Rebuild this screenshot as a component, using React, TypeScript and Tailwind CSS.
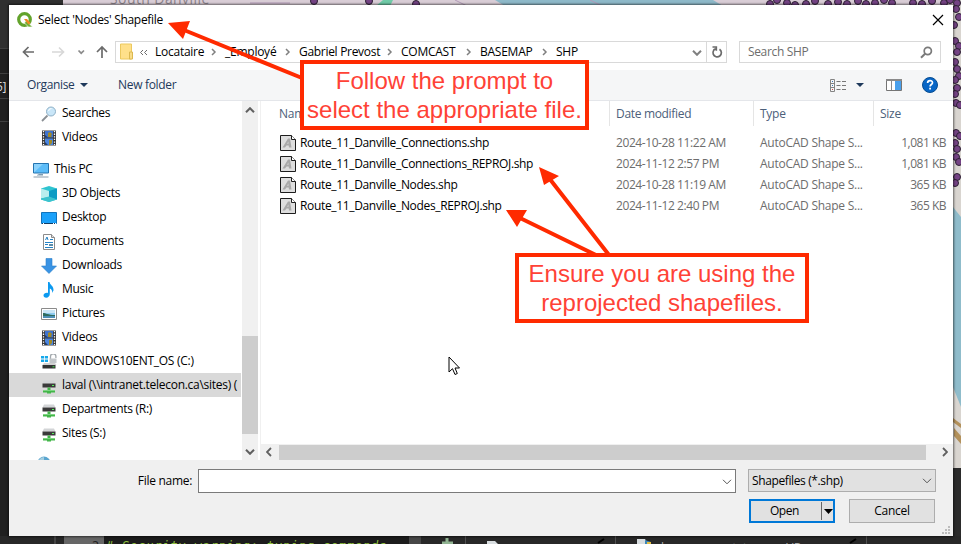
import React from "react";

type IconProps = { className?: string };

const Searches = () => (
  <svg width="16" height="16" viewBox="0 0 16 16">
    <path d="M1 15L6.500 9.500" stroke="#8a8f94" strokeWidth="1.800" />
    <circle cx="10" cy="5.500" r="4.500" fill="#c9e6f8" stroke="#8fb0c6" />
    <path d="M7.500 5a3 3 0 013-2.500" stroke="#fff" fill="none" />
  </svg>
);
const Film = () => (
  <svg width="16" height="16" viewBox="0 0 16 16">
    <path d="M1 0.500h14v15H1z" fill="#383838" />
    <path d="M4 1h8v6.500H4z" fill="#3f73cf" />
    <path d="M4 8.500h8V15H4z" fill="#4a86e0" />
    <path d="M7 3l2-1 2 2-1 2 1 1H7zM8 10h3v3l-2 2H8z" fill="#a08a28" />
    <path d="M4 5l3 2.500H4zM4 12l3 3H4z" fill="#213b6c" />
    <path d="M2.500 1v14M13.500 1v14" stroke="#fff" strokeWidth="1.300" strokeDasharray="1.300 1.300" />
  </svg>
);
const Pc = () => (
  <svg width="16" height="16" viewBox="0 0 16 16">
    <path d="M0.500 1.500h15v9.500H0.500z" fill="#5cbcf8" stroke="#2474b0" />
    <path d="M1 10.500V2h9z" fill="#8bd2fc" />
    <path d="M6 12h4v1.500H4V13z" fill="#7f9bb0" />
    <path d="M0.500 15h15" stroke="#8a9cab" />
  </svg>
);
const Cube = () => (
  <svg width="16" height="16" viewBox="0 0 16 16">
    <path d="M0 2.500L8 0l8 2.500v11L8 16l-8-2.500z" fill="#2fc4d0" />
    <path d="M0 2.500L8 5v6l-8 1.500z" fill="#b9eeee" />
    <path d="M8 5l8-2.500v11L8 11z" fill="#0d9cc4" />
    <path d="M0 13.500V12.500L8 10.500l8 3L8 16z" fill="#3cc3ce" />
  </svg>
);
const Desk = () => (
  <svg width="16" height="16" viewBox="0 0 16 16">
    <path d="M0.500 2.500h15v11H0.500z" fill="#1ba1fa" stroke="#1273bb" />
    <path d="M1 13.500h14" stroke="#123e66" />
    <path d="M2 13.500h1M12 13.500h1M14 13.500h1" stroke="#fff" />
  </svg>
);
const Docs = () => (
  <svg width="16" height="16" viewBox="0 0 16 16">
    <path d="M2.500 0.500h8l3 3v12h-11z" fill="#fff" stroke="#8b8b8b" />
    <path d="M10.500 0.500v3h3" fill="#ddd" stroke="#8b8b8b" />
    <path d="M4.500 6l1.500-3 1 3M9 5.500h3M4 8.500h8M4 10.500h3M4 13.500h8" stroke="#2582c4" fill="none" />
    <path d="M8 10h4v2H8z" fill="#5b8ba8" />
  </svg>
);
const Down = () => (
  <svg width="16" height="16" viewBox="0 0 16 16">
    <path d="M5 0.500h6v7.500h4.500L8 15.500 0.500 8H5z" fill="#3993e4" stroke="#2b7fc9" strokeWidth=".6" />
  </svg>
);
const Music = () => (
  <svg width="16" height="16" viewBox="0 0 16 16">
    <path d="M7 0h1.500c.3 3 4.500 4 4 8.500l-1.500 2.500c.6-3-.8-4-2.200-4.600V12c0 2-1.500 3.700-3.600 3.700C3.500 15.700 2.500 14.700 2.500 13.500c0-2 2.500-3 4.500-2.500z" fill="#0c9af0" />
  </svg>
);
const Pics = () => (
  <svg width="16" height="16" viewBox="0 0 16 16">
    <path d="M0.500 2.500h15v11H0.500z" fill="#fff" stroke="#8b8b8b" />
    <path d="M2 4h12v8H2z" fill="#8ecbf0" />
    <path d="M2 4h12v3H2z" fill="#c9e5f6" />
    <path d="M2 7c3 0 5 2 12 2v1H2z" fill="#2f6c60" />
    <path d="M2 10h12v2H2z" fill="#4c8eb6" />
  </svg>
);
const DriveC = () => (
  <svg width="16" height="16" viewBox="0 0 16 16">
    <path d="M0 2h3v2.500H0zM3.800 2H7v2.500H3.800zM0 5.500h3V8H0zM3.800 5.500H7V8H3.800z" fill="#16a8ea" />
    <path d="M9.500 5V2.500a2.700 2.700 0 015.400 0V4" fill="none" stroke="#a3a9ad" strokeWidth="1.300" />
    <path d="M8.500 4.500h7v4.500h-7z" fill="#c3c7ca" />
    <path d="M3 9h11l1.500 2H1.500z" fill="#d2d2d2" />
    <path d="M1.500 11h13v3.500h-13z" fill="#333" />
    <path d="M11.500 12.300h2v1h-2z" fill="#45e04c" />
  </svg>
);
const NetDrive = () => (
  <svg width="16" height="16" viewBox="0 0 16 16">
    <path d="M3 2.500h10l1.500 3h-13z" fill="#d3d5d7" />
    <path d="M1.500 5.500h13v4h-13z" fill="#3a3a3a" />
    <path d="M11 7h2v1h-2z" fill="#57f05c" />
    <path d="M6.500 9.500h3v3h4.500v2h-4v1H6v-1H2v-2h4.500z" fill="#43b649" />
    <path d="M2 12h12v1H2z" fill="#7ed482" />
  </svg>
);
const Globe = () => (
  <svg width="16" height="16" viewBox="0 0 16 16">
    <circle cx="8" cy="10" r="6.500" fill="#5aa5cf" />
    <path d="M3 7a6 6 0 015-3v6H3z" fill="#a6cfe0" />
  </svg>
);
const ShpFile = () => (
  <svg width="16" height="16" viewBox="0 0 16 16" className="shrink-0">
    <path d="M0.500 0.500h11l4 4v11H0.500z" fill="#dedede" stroke="#1d1d1d" />
    <path d="M11.500 0.500v4h4" fill="#fff" stroke="#1d1d1d" />
    <path d="M2.500 12.500L8 3.500h2L11.500 12.500H9L8.700 10.500H6.500L5 12.500zM7.200 8.700h1.300L8.300 6.500z" fill="#a9a9a9" />
  </svg>
);

const Chev = ({ className = "" }: IconProps) => (
  <svg width="6" height="8" viewBox="0 0 6 8" className={`shrink-0 ${className}`}>
    <path d="M1 1l3 3-3 3" fill="none" stroke="#808080" strokeWidth="1.500" />
  </svg>
);
const ChevDown = ({ className = "" }: IconProps) => (
  <svg width="10" height="6" viewBox="0 0 10 6" fill="none" stroke="currentColor" className={className}>
    <path d="M1 0.800l4 4 4-4" strokeWidth="inherit" />
  </svg>
);

function TreeItem({ icon, label, level = 1, selected = false }: { icon: React.ReactNode; label: string; level?: number; selected?: boolean }) {
  return (
    <div className={`flex h-6 shrink-0 items-center gap-[5px] whitespace-nowrap tracking-[-0.28px] ${level ? "pl-8" : "pl-6"} ${selected ? "bg-[#d9d9d9]" : ""}`}>
      <span className="mt-px shrink-0">{icon}</span>
      <span>{label}</span>
    </div>
  );
}

const files = [
  ["Route_11_Danville_Connections.shp", "2024-10-28 11:22 AM", "1,081 KB"],
  ["Route_11_Danville_Connections_REPROJ.shp", "2024-11-12 2:57 PM", "1,081 KB"],
  ["Route_11_Danville_Nodes.shp", "2024-10-28 11:19 AM", "365 KB"],
  ["Route_11_Danville_Nodes_REPROJ.shp", "2024-11-12 2:40 PM", "365 KB"],
];

const mapPins = [
  [314, 1], [369, 1], [416, 4], [770, 4], [777, 0], [787, 3], [795, 5], [806, 4], [815, 1], [828, 4], [838, 2], [847, 4], [858, 1], [866, 4], [875, 3], [884, 0], [892, 3], [913, 3], [922, 4], [932, 1], [944, 3], [950, 0],
  [957, 3], [956, 9], [959, 17], [954, 25], [955, 41], [959, 46], [957, 52], [955, 62], [957, 69], [959, 76], [955, 80], [957, 88], [955, 94], [956, 103], [960, 105], [956, 133], [960, 136], [955, 143], [957, 149], [956, 157], [959, 162], [957, 177], [955, 183],
];

function Desktop() {
  return (
    <svg width="961" height="544" className="absolute inset-0">
      <rect width="961" height="544" fill="#202020" />
      <rect width="63" height="6" fill="#303030" />
      <rect width="9" height="48" fill="#303030" />
      <path d="M0 48.500h9M0 73.500h9M0 98.500h9M0 121.500h9" stroke="#404040" />
      <rect x="63" width="898" height="6" fill="#d9cdd6" />
      <path d="M383 0h10l-3 6h-14z" fill="#70cba8" />
      <path d="M495 0h218l10 6H505z" fill="#8eb9c9" />
      <path d="M455 0l12 6M590 0l12 6M250 3h40" stroke="#b39ab8" />
      <rect x="953" width="8" height="468" fill="#d9d5d0" />
      <path d="M953 207l8 10v190l-8-20z" fill="#8fbccb" />
      <path d="M953 418l8 6v4l-8-6zM954 428l7 8v8l-7-8z" fill="#b3915b" />
      {mapPins.map(([x, y], i) => (
        <circle key={i} cx={x} cy={y} r="3.500" fill="#744384" stroke="#2d2033" />
      ))}
      <rect x="953" y="468" width="8" height="76" fill="#2b2b2b" />
      <rect y="536" width="961" height="8" fill="#282828" />
      <rect x="54" y="536" width="2" height="8" fill="#444" />
      <rect x="64" y="536" width="40" height="8" fill="#666" />
      <rect x="104" y="536" width="305" height="8" fill="#1c1c1c" />
      <rect x="409" y="536" width="12" height="8" fill="#474747" />
      <path d="M465.500 536v8M615.500 536v8M866.500 536v8" stroke="#505050" />
      <path d="M447 538v6M442 543h11" stroke="#91b492" strokeWidth="3" />
      <path d="M487 541h8l3 3h-11zM637 539h8l3 5h-11z" fill="#d8dde0" />
      <path d="M645 540l6 2v2h-6z" fill="#3e87b8" />
      <path d="M647 542h4v2h-4z" fill="#e2bd3f" />
      <path d="M598 543l6-4M850 543l6-4" stroke="#000" strokeWidth="2" />
      <g fontFamily="'DejaVu Sans Mono', monospace" fontSize="12">
        <text x="92" y="550" fill="#222">2</text>
        <text x="106" y="550" fill="#8fc03f" fontStyle="italic" textLength="280">
          # Security warning: typing commands
        </text>
      </g>
      <g fontFamily="'Open Sans', sans-serif" fontSize="12">
        <text x="661" y="552" fill="#aaa" textLength="140">layer_export_to_csv_VR</text>
        <text x="110" y="4" fill="#8b828a" textLength="99" fontSize="14">South Danville</text>
        <text x="-4" y="91" fill="#ddd">5]</text>
      </g>
    </svg>
  );
}

export default function App() {
  return (
    <div className="relative h-[544px] w-[961px] overflow-hidden font-['Open_Sans','Noto_Sans',sans-serif] text-[12px] leading-4 tracking-[-0.25px] text-black">
      <Desktop />

      <div className="absolute top-[5px] left-[9px] flex h-[531px] w-[944px] flex-col bg-white shadow-[0_0_2px_1px_rgba(0,0,0,0.55)]">
        <header className="flex h-[29px] shrink-0 items-center pr-[9px] pl-2">
          <svg width="16" height="16" viewBox="0 0 16 16">
            <circle cx="7.500" cy="7.500" r="5.800" fill="none" stroke="#63a32c" strokeWidth="3.200" />
            <path d="M9 8.500l6.500 6.500h-4L7.500 11z" fill="#6fae34" stroke="#fff" strokeWidth=".6" />
            <path d="M7 7h3l3.500 4-2 1.500z" fill="#ee8a22" />
          </svg>
          <h1 className="ml-[5px] tracking-[-0.3px]">Select 'Nodes' Shapefile</h1>
          <svg width="12" height="12" viewBox="0 0 12 12" className="ml-auto">
            <path d="M1 1l10 10M11 1L1 11" stroke="#000" strokeWidth="1.200" />
          </svg>
        </header>

        <nav className="flex h-9 shrink-0 items-center pl-[13px]">
          <svg width="86" height="16" viewBox="0 0 86 16" fill="none" strokeWidth="1.700" className="mr-[7px]">
            <path d="M12 8H1.500M6.500 3L1.500 8l5 5" stroke="#6b6b6b" />
            <path d="M30 8h11M37 3.500L41.500 8 37 12.500" stroke="#d8d8d8" />
            <path d="M56.500 6.500l2.700 2.700L62 6.500" stroke="#8b8b8b" />
            <path d="M80 14V3M75 8l5-5 5 5" stroke="#6b6b6b" />
          </svg>
          <div className="flex h-[22px] w-[612px] border border-[#d9d9d9]">
            <div className="flex flex-1 items-center">
              <svg width="14" height="18" viewBox="0 0 14 18" className="ml-[4px] shrink-0">
                <path d="M0.500 1h11v15h-11z" fill="#ffe08a" stroke="#ecc95f" />
                <path d="M9.500 9h3v7h-3z" fill="#f9dd8a" stroke="#dcb850" />
              </svg>
              <svg width="9" height="7" viewBox="0 0 9 7" fill="none" stroke="#6b6b6b" className="ml-[5px] shrink-0">
                <path d="M4 1L1.500 3.500 4 6M8 1L5.500 3.500 8 6" />
              </svg>
              <span className="ml-[7px] w-[48px] shrink-0 whitespace-nowrap">Locataire</span>
              <Chev className="ml-[8px]" />
              <span className="ml-[8px] w-[51px] shrink-0 whitespace-nowrap">_Employé</span>
              <Chev className="ml-[9px]" />
              <span className="ml-[8px] w-[79px] shrink-0 whitespace-nowrap tracking-[-0.3px]">Gabriel Prevost</span>
              <Chev className="ml-[9px]" />
              <span className="ml-[8px] w-[57px] shrink-0 whitespace-nowrap">COMCAST</span>
              <Chev className="ml-[8px]" />
              <span className="ml-[8px] w-[53px] shrink-0 whitespace-nowrap">BASEMAP</span>
              <Chev className="ml-[9px]" />
              <span className="ml-[8px]">SHP</span>
              <ChevDown className="mt-[2px] mr-[4px] ml-auto stroke-2 text-[#808080]" />
            </div>
            <div className="flex w-5 items-center justify-center border-l border-[#d9d9d9]">
              <svg width="12" height="13" viewBox="0 0 12 13" fill="none" stroke="#6b6b6b" strokeWidth="1.700">
                <path d="M8.500 3.200A4.200 4.200 0 116 2.500c-1.500 0-2.500.4-3.400 1.300M1.500 1h3.800v3.800" />
              </svg>
            </div>
          </div>
          <div className="ml-[12px] flex h-[22px] w-[202px] items-center justify-between border border-[#d9d9d9] pr-[7px] pl-2 text-[#6d6d6d]">
            <span className="tracking-[-0.35px]">Search SHP</span>
            <svg width="13" height="13" viewBox="0 0 13 13" fill="none" stroke="#7a7a7a">
              <circle cx="7.800" cy="5" r="3.600" strokeWidth="1.700" />
              <path d="M5.300 7.500L1 11.800" strokeWidth="2" />
            </svg>
          </div>
        </nav>

        <div className="flex h-[31px] shrink-0 items-center border-b border-[#e4e6ea] bg-[#f5f6f7] pr-[15px] pl-[18px] text-[#1e395b]">
          <span className="w-[47px] tracking-[-0.35px]">Organise</span>
          <svg width="8" height="4" viewBox="0 0 8 4" className="ml-[6px]">
            <path d="M0 0h8L4 4z" fill="#1e395b" />
          </svg>
          <span className="ml-[30px] tracking-[-0.32px]">New folder</span>
          <svg width="17" height="13" viewBox="0 0 17 13" className="ml-auto" fill="none" stroke="#848484">
            <path d="M0.500 0.500h4v12h-4zM0.500 4.500h4M0.500 8.500h4" />
            <path d="M6.500 2.500h4M12 2.500h4M6.500 6.500h4M12 6.500h4M6.500 10.500h4M12 10.500h4" stroke="#777" />
            <path d="M2 2.500h1M2 6.500h1" stroke="#3b78b5" />
            <path d="M2 10.500h1" stroke="#d24747" />
          </svg>
          <svg width="8" height="4" viewBox="0 0 8 4" className="mr-px ml-[9px]">
            <path d="M0 0h8L4 4z" fill="#1e395b" />
          </svg>
          <svg width="16" height="12" viewBox="0 0 16 12" className="ml-[21px]">
            <path d="M0.500 0.500h15v11H0.500z" fill="#fff" stroke="#757575" />
            <path d="M0 0h16v2H0zM5 2h1v9H5z" fill="#8a8a8a" />
            <path d="M9 2h6v9H9z" fill="#4aa0ec" />
          </svg>
          <svg width="16" height="16" viewBox="0 0 16 16" className="ml-[20px]">
            <circle cx="8" cy="8" r="7.500" fill="#0866c6" stroke="#084d91" />
            <path d="M5.600 6c0-3 4.900-3 4.900-.3C10.500 7.500 8.100 7.500 8.100 9.500" fill="none" stroke="#fff" strokeWidth="1.700" />
            <path d="M7.200 10.800H9v1.800H7.200z" fill="#fff" />
          </svg>
        </div>

        <main className="flex h-[359px] shrink-0">
          <aside className="flex w-[232px] flex-col overflow-hidden">
            <TreeItem icon={<Searches />} label="Searches" />
            <TreeItem icon={<Film />} label="Videos" />
            <div className="h-2 shrink-0" />
            <TreeItem icon={<Pc />} label="This PC" level={0} />
            <TreeItem icon={<Cube />} label="3D Objects" />
            <TreeItem icon={<Desk />} label="Desktop" />
            <TreeItem icon={<Docs />} label="Documents" />
            <TreeItem icon={<Down />} label="Downloads" />
            <TreeItem icon={<Music />} label="Music" />
            <TreeItem icon={<Pics />} label="Pictures" />
            <TreeItem icon={<Film />} label="Videos" />
            <TreeItem icon={<DriveC />} label="WINDOWS10ENT_OS (C:)" />
            <TreeItem icon={<NetDrive />} label="laval (\\intranet.telecon.ca\sites) (" selected />
            <TreeItem icon={<NetDrive />} label="Departments (R:)" />
            <TreeItem icon={<NetDrive />} label="Sites (S:)" />
            <div className="mt-2 shrink-0 pl-[27px]"><Globe /></div>
          </aside>
          <div className="ml-px flex w-4 flex-col items-center bg-[#f0f0f0] text-[#606060]">
            <ChevDown className="mt-[6px] mr-px rotate-180 stroke-2" />
            <div className="mt-[223px] h-[98px] w-full bg-[#cdcdcd]" />
            <ChevDown className="mt-[15px] mr-px stroke-2" />
          </div>
          <section className="ml-[2px] flex flex-1 flex-col border-l border-[#f0f0f0]">
            <div className="flex h-[25px] shrink-0 items-center text-[#4c607a]">
              <span className="w-[348px] pl-[18px]">Name</span>
              <span className="flex h-full w-[144px] items-center border-l border-[#e5e5e5] pl-[6px] tracking-[-0.32px]">Date modified</span>
              <span className="flex h-full w-[120px] items-center border-l border-[#e5e5e5] pl-[6px]">Type</span>
              <span className="flex h-full items-center border-l border-[#e5e5e5] pl-[6px]">Size</span>
            </div>
            <div className="mt-[6px] flex flex-col">
              {files.map(([name, date, size]) => (
                <div key={name} className="flex h-[21px] items-center pl-[19px] whitespace-nowrap text-[#6d6d6d]">
                  <ShpFile />
                  <span className="ml-1 w-[316px] tracking-[-0.34px] text-black">{name}</span>
                  <span className="w-[144px] tracking-[-0.42px]">{date}</span>
                  <span className="w-[116px]">AutoCAD Shape S...</span>
                  <span className="ml-auto pr-[7px] tracking-[-0.5px]">{size}</span>
                </div>
              ))}
            </div>
            <div className="mt-auto flex h-4 items-center bg-[#f0f0f0]">
              <svg width="6" height="10" viewBox="0 0 6 10" className="ml-[5px]"><path d="M5 1L1 5l4 4" fill="none" stroke="#606060" strokeWidth="1.800" /></svg>
              <div className="ml-[7px] h-[15px] w-[647px] bg-[#cdcdcd]" />
              <svg width="6" height="10" viewBox="0 0 6 10" className="ml-[16px]"><path d="M1 1l4 4-4 4" fill="none" stroke="#606060" strokeWidth="1.800" /></svg>
            </div>
          </section>
        </main>

        <footer className="flex flex-1 flex-col bg-[#f0f0f0] pt-[9px]">
          <div className="flex items-start">
            <label className="mt-[4px] w-[189px] pr-[6px] text-right tracking-[-0.3px]">File name:</label>
            <div className="flex h-6 w-[538px] items-center justify-end border border-[#7a7a7a] bg-white pr-[3px] text-[#555]">
              <ChevDown className="mt-px" />
            </div>
            <div className="ml-3 flex h-[23px] w-[188px] items-center justify-between border border-[#adadad] bg-[#e1e1e1] pr-[3px] pl-[3px]">
              <span className="tracking-[-0.38px]">Shapefiles (*.shp)</span>
              <ChevDown className="mt-px text-[#555]" />
            </div>
          </div>
          <div className="mt-[6px] flex pl-[740px]">
            <button className="flex h-6 w-[86px] items-center border-2 border-[#0078d7] bg-[#e1e1e1]">
              <span className="w-[70px] pr-[3px] text-center tracking-[-0.4px]">Open</span>
              <span className="flex h-[18px] items-center border-l border-[#666] pl-[2px]">
                <svg width="9" height="5" viewBox="0 0 9 5"><path d="M0 0h9L4.500 5z" /></svg>
              </span>
            </button>
            <button className="ml-[14px] h-6 w-[86px] border border-[#adadad] bg-[#e1e1e1]">Cancel</button>
          </div>
          <svg width="8" height="8" viewBox="0 0 8 8" className="mt-[3px] mr-[3px] ml-auto" fill="#bcbcbc">
            <path d="M6 0h2v2H6zM3 3h2v2H3zM6 3h2v2H6zM0 6h2v2H0zM3 6h2v2H3zM6 6h2v2H6z" />
          </svg>
        </footer>
      </div>

      <svg width="961" height="544" className="absolute inset-0" fill="#ff2a00">
        <path d="M302 78L184 30M609 255L549 178M598 256L518 217" stroke="#ff2a00" strokeWidth="4" />
        <path d="M168 23l22-2-7 18zM539 167l20 9-15 9zM506 210l21 0-10 17z" />
      </svg>
      <div className="absolute top-[60px] left-[300px] flex h-[70px] w-[289px] items-center justify-center border-4 border-[#ff2a00] bg-white text-center font-['Liberation_Sans',Arial,sans-serif] text-[24px] leading-[29px] tracking-normal whitespace-nowrap text-[#ff4236]">
        Follow the prompt to
        <br />
        select the appropriate file.
      </div>
      <div className="absolute top-[253px] left-[515px] flex h-[70px] w-[294px] items-center justify-center border-4 border-[#ff2a00] bg-white text-center font-['Liberation_Sans',Arial,sans-serif] text-[24px] leading-[29px] tracking-normal whitespace-nowrap text-[#ff4236]">
        Ensure you are using the
        <br />
        reprojected shapefiles.
      </div>
      <svg width="12" height="20" viewBox="0 0 12 20" className="absolute top-[356px] left-[448px]">
        <path d="M1 1v15l3.500-3.300L7 18.500l2.300-1L7 12h4.500z" fill="#fff" stroke="#000" />
      </svg>
    </div>
  );
}
